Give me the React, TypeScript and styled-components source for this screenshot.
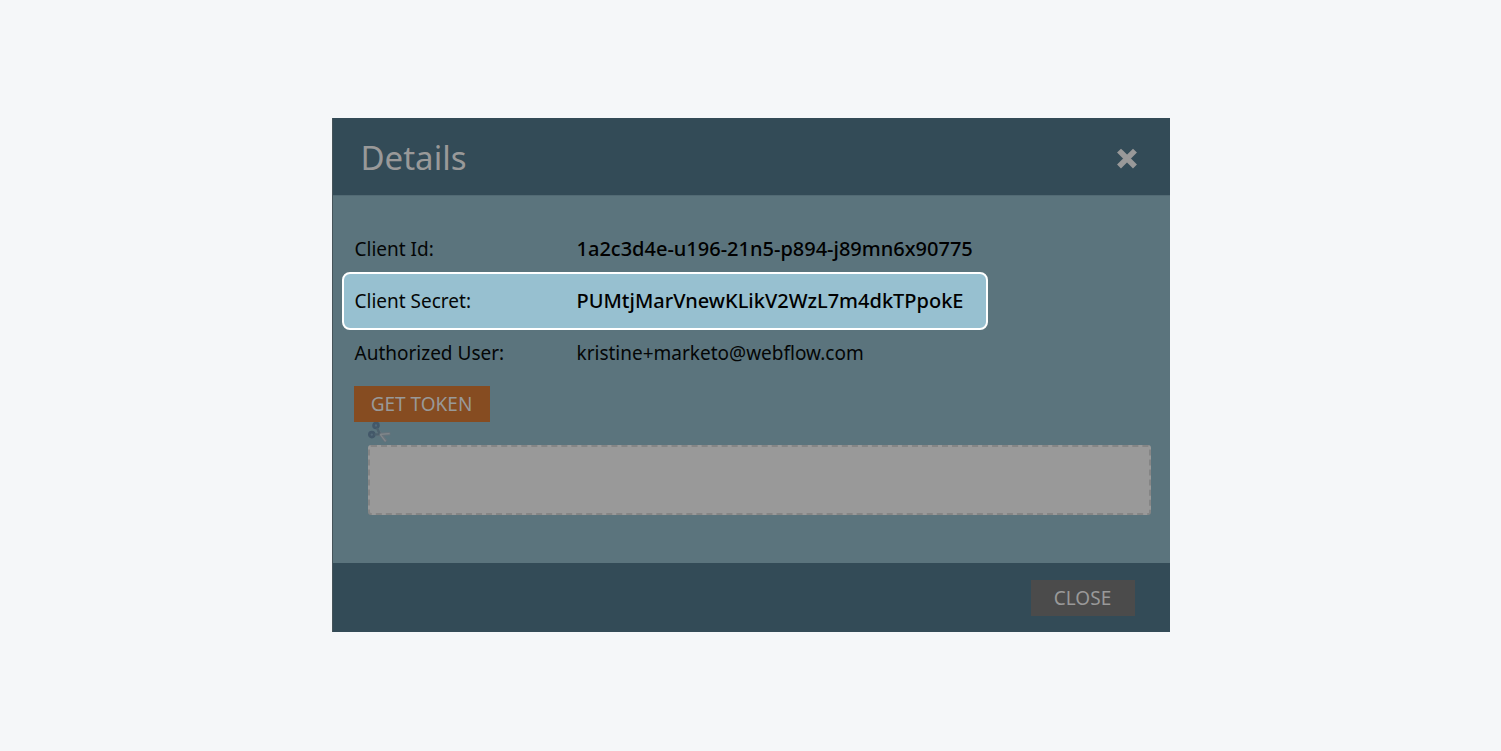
import React from "react";
import styled, { createGlobalStyle } from "styled-components";

const GlobalStyle = createGlobalStyle`
  *, *::before, *::after { box-sizing: border-box; }
  body {
    margin: 0;
    background: #f5f7f9;
    font-family: "Noto Sans", "Open Sans", sans-serif;
  }
`;

const Page = styled.main`
  display: flex;
  justify-content: center;
  align-items: flex-start;
  min-height: 100vh;
  padding: 118px 16px;
`;

const Dialog = styled.section`
  width: 100%;
  max-width: 838px;
  background: #5b747d;
  border-left: 1px solid #46545a;
`;

const Header = styled.header`
  display: flex;
  align-items: center;
  justify-content: space-between;
  height: 77px;
  padding: 3px 32px 0 28px;
  background: #334b57;
`;

const Title = styled.h1`
  margin: 0;
  font-size: 33px;
  line-height: 46px;
  font-weight: 400;
  color: #999;
`;

const IconButton = styled.button`
  display: flex;
  padding: 0;
  border: 0;
  background: none;
  color: #999;
  cursor: pointer;
`;

const Body = styled.div`
  padding: 30px 19px 48px 9px;
  border-top: 1px solid #526a74;
`;

const DetailList = styled.dl`
  margin: 0 0 10px;
`;

const DetailRow = styled.div<{ $highlighted?: boolean }>`
  display: grid;
  grid-template-columns: 222px 1fr;
  align-items: center;
  width: 646px;
  max-width: 100%;
  height: ${(p) => (p.$highlighted ? 58 : 46)}px;
  padding: 0 10px 0 11px;
  border: solid ${(p) => (p.$highlighted ? "#fff" : "transparent")};
  border-width: ${(p) => (p.$highlighted ? "2px" : "0 2px")};
  border-radius: 8px;
  background: ${(p) => (p.$highlighted ? "#97c0d0" : "transparent")};
  line-height: 28px;
`;

const Label = styled.dt`
  font-size: 19px;
  color: #040606;
`;

const Value = styled.dd<{ $strong?: boolean }>`
  margin: 0;
  font-size: ${(p) => (p.$strong ? 20 : 19)}px;
  font-weight: ${(p) => (p.$strong ? 500 : 400)};
  color: ${(p) => (p.$strong ? "#000" : "#040606")};
`;

const ActionButton = styled.button<{ $primary?: boolean }>`
  display: block;
  min-width: ${(p) => (p.$primary ? 136 : 104)}px;
  height: 36px;
  padding: 0;
  border: 0;
  background: ${(p) => (p.$primary ? "#864c21" : "#4b4b4b")};
  color: #999;
  font: 400 19px/36px "Noto Sans", "Open Sans", sans-serif;
  cursor: pointer;
`;

const TokenArea = styled.div`
  padding-left: 12px;
`;

const TokenField = styled.div`
  padding-left: 14px;
`;

const TokenBox = styled.textarea`
  display: block;
  width: 100%;
  height: 70px;
  border: 2px dashed #858585;
  border-radius: 3px;
  background: #999;
  resize: none;
  outline: none;
`;

const ScissorsIcon = styled.svg`
  display: block;
`;

const Footer = styled.footer`
  display: flex;
  align-items: center;
  justify-content: flex-end;
  height: 69px;
  padding: 1px 35px 0 0;
  background: #334b57;
`;

const details = [
  { label: "Client Id:", value: "1a2c3d4e-u196-21n5-p894-j89mn6x90775", strong: true },
  { label: "Client Secret:", value: "PUMtjMarVnewKLikV2WzL7m4dkTPpokE", strong: true, highlighted: true },
  { label: "Authorized User:", value: "kristine+marketo@webflow.com" },
];

export default function App() {
  return (
    <Page>
      <GlobalStyle />
      <Dialog role="dialog" aria-labelledby="details-title">
        <Header>
          <Title id="details-title">Details</Title>
          <IconButton type="button" aria-label="Dismiss">
            <svg width="22" height="22" viewBox="0 0 22 22" aria-hidden="true">
              <path
                d="M5 5.6 17 17.6M17 5.6 5 17.6"
                stroke="currentColor"
                strokeWidth="5.6"
                strokeLinecap="square"
              />
            </svg>
          </IconButton>
        </Header>
        <Body>
          <DetailList>
            {details.map((d) => (
              <DetailRow key={d.label} $highlighted={d.highlighted}>
                <Label>{d.label}</Label>
                <Value $strong={d.strong}>{d.value}</Value>
              </DetailRow>
            ))}
          </DetailList>
          <TokenArea>
            <ActionButton type="button" $primary>
              GET TOKEN
            </ActionButton>
            <TokenField>
              <ScissorsIcon width="24" height="23" viewBox="0 0 24 23" fill="none" aria-hidden="true">
                <path d="M10.5 9.5 18 19.5" stroke="#6a747c" strokeWidth="3.4" />
                <path d="M9 12.6 22.3 11.6" stroke="#6a747c" strokeWidth="3.4" />
                <path d="M11.5 11.5 17.6 19.4M12 12.4 21.6 11.6" stroke="#82888c" strokeWidth="1.2" />
                <circle cx="8" cy="3.4" r="2.5" fill="#546a79" stroke="#435869" strokeWidth="2.6" />
                <circle cx="3.8" cy="12.6" r="2.5" fill="#546a79" stroke="#435869" strokeWidth="2.6" />
                <path d="M9 6 11.6 11.8M6.4 12.4 11.6 12.2" stroke="#4d616d" strokeWidth="2.4" />
              </ScissorsIcon>
              <TokenBox aria-label="Token" readOnly />
            </TokenField>
          </TokenArea>
        </Body>
        <Footer>
          <ActionButton type="button">CLOSE</ActionButton>
        </Footer>
      </Dialog>
    </Page>
  );
}
